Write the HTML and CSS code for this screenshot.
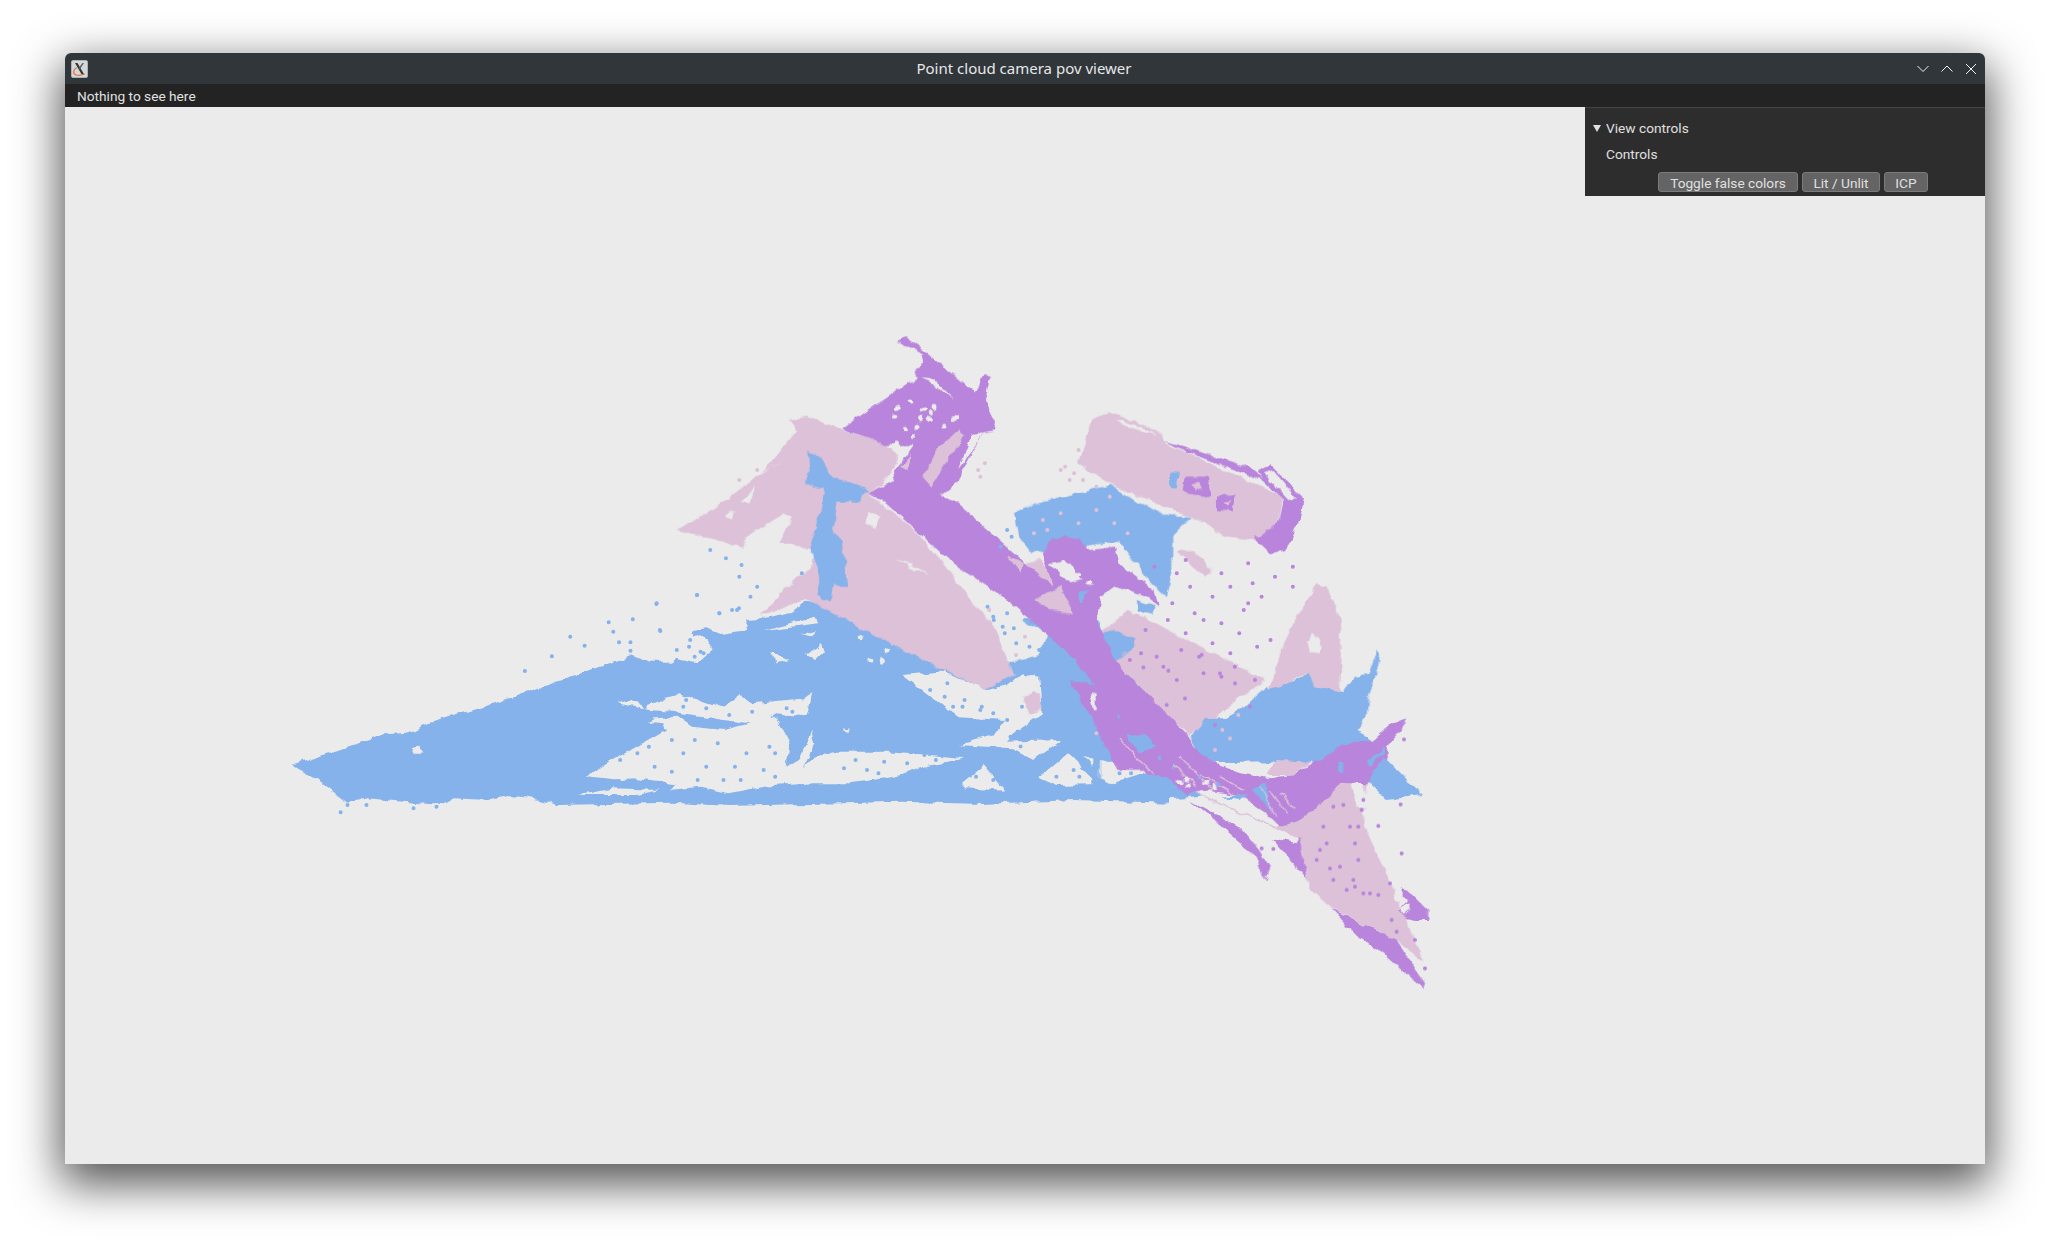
FILE: index.html
```html
<!DOCTYPE html>
<html lang="en">
<head>
  <meta charset="UTF-8" />
  <title>Point cloud camera pov viewer</title>
  <link rel="stylesheet" href="styles.css">
</head>
<body>
  <div class="window">
    <div class="titlebar">
      <svg class="app-icon" viewBox="0 0 17 18">
        <rect x="0.5" y="0.5" width="16" height="17" rx="1.5" fill="#d5d8da" stroke="#aeb2b5"/>
        <path d="M4 3 L6.5 3 L13.5 15 L11 15 Z" fill="#34373a"/>
        <path d="M13 3 L11.5 3 L7.8 8 L8.6 9.6 Z" fill="#55585b"/>
        <path d="M6.5 7.5 C2 9 1.5 14 5 15 C8 15.8 11 15 13.5 14" fill="none" stroke="#d9793a" stroke-width="1.2"/>
      </svg>
      <div class="title">Point cloud camera pov viewer</div>
      <div class="win-buttons">
        <svg viewBox="0 0 12 12"><path d="M0.5 3 L6 8.5 L11.5 3"/></svg>
        <svg viewBox="0 0 12 12"><path d="M0.5 8.5 L6 3 L11.5 8.5"/></svg>
        <svg viewBox="0 0 12 12"><path d="M1 1 L11 11 M11 1 L1 11"/></svg>
      </div>
    </div>
    <div class="menubar">Nothing to see here</div>
    <div class="canvas">
      <svg class="cloud" viewBox="65 107 1920 1057">
        <defs>
          <filter id="rough" x="0" y="0" width="100%" height="100%" filterUnits="userSpaceOnUse" color-interpolation-filters="sRGB">
            <feTurbulence type="fractalNoise" baseFrequency="0.09" numOctaves="2" seed="4"/>
            <feDisplacementMap in="SourceGraphic" scale="7" xChannelSelector="R" yChannelSelector="G"/>
          </filter>
        </defs>
        <g class="rough">
        <!-- blue layer, left part -->
        <g transform="translate(270 580) scale(.574 .3333)">
          <path class="blue" d="M38 553 L120 510 200 463 240 458 280 428 400 365 500 305 632 225 662 245 700 245 740 205 738 150 760 145 785 162 830 150 830 120 870 115 905 100 935 65 1100 120 1568 120 1568 668 1400 660 1240 672 1100 665 800 678 700 668 500 675 483 665 440 650 405 648 380 660 320 655 300 675 250 668 215 662 170 655 135 668 90 610 Z"/>
          <path class="hole" d="M548 588 L690 450 685 430 660 425 670 415 710 410 735 440 790 450 860 420 880 410 905 490 900 560 920 540 945 450 950 490 930 560 950 530 985 515 1090 515 1210 535 1140 560 1090 590 1010 610 950 610 860 620 800 640 750 620 695 630 705 610 640 595 600 598 Z"/>
          <path class="hole" d="M540 645 L600 625 680 630 640 645 Z"/>
          <path class="hole" d="M605 370 L630 360 655 385 660 375 715 340 760 370 790 385 820 345 840 370 930 355 945 340 935 410 880 400 860 435 790 420 760 410 700 395 660 390 Z"/>
          <path class="hole" d="M1100 285 L1170 275 1250 330 1285 315 1310 280 1340 290 1345 400 1310 440 1280 485 1380 480 1330 540 1290 505 1200 495 1260 465 1280 420 1200 412 1150 350 Z"/>
          <path class="hole" d="M1210 605 L1245 555 1280 632 1210 625 Z M1340 595 L1390 520 1445 615 1370 618 Z M1420 535 L1540 570 1460 612 Z"/>
          <path class="hole" d="M705 235 L715 190 745 165 775 205 745 250 Z M935 225 L960 190 965 215 950 240 Z M925 165 L955 155 945 175 Z M860 150 L950 110 955 130 Z M248 505 L258 500 266 518 252 518 Z M1425 330 L1465 335 1460 395 1440 400 Z M875 215 L905 240 880 250 Z"/>
          <path class="dots-hole" d="M1030 170h.1M1075 210h.1M1045 240h.1M1065 240h.1M1005 445h.1"/>
        </g>

        <!-- pink sheets -->
        <g transform="translate(650 320) scale(.4464 .3333)">
          <path class="hole" d="M1000 860 L1160 640 1240 600 1500 700 1400 1090 1240 1210 1030 1030 Z"/>
          <path class="hole" d="M730 830 L890 940 870 1010 790 1030 Z"/>
          <path class="hole" d="M1040 680 L1120 760 1160 840 1090 850 1060 780 Z"/>
          <path class="pink" d="M60 630 L150 560 210 500 270 430 330 330 310 298 350 290 530 375 555 400 555 430 520 490 490 520 600 640 680 770 720 840 770 920 815 1065 750 1110 655 1050 350 840 245 890 330 770 360 745 370 690 290 665 320 590 300 580 225 640 205 685 150 660 Z"/>
          <path class="hole" d="M205 545 L235 500 225 550 Z M170 590 L190 570 185 600 Z M225 470 L300 425 240 465 Z"/>
          <path class="pink" d="M990 300 L1030 275 1150 340 1155 370 1420 530 1400 620 1360 660 1290 650 1215 590 1170 570 1100 530 1040 500 960 430 Z"/>
          <path class="hole" d="M1040 300 L1060 300 1140 345 1100 335 Z"/>
          <path class="blue" d="M815 580 L860 550 1030 495 1090 545 1160 585 1215 590 1170 650 1170 760 1155 830 1110 770 1050 665 960 680 855 700 825 650 Z"/>
          <path class="pink" d="M1070 870 L1380 1080 1320 1130 1250 1210 1210 1245 1130 1150 1040 1020 1000 950 Z"/>
          <path class="pink" d="M1495 790 L1520 810 1545 900 1550 1000 1545 1130 1500 1110 1470 1060 1440 1080 1430 1110 1385 1110 1420 970 1450 890 Z"/>
          <path class="hole" d="M1485 935 L1502 960 1498 1000 1478 995 1472 965 Z"/>
          <path class="pink" d="M1180 695 L1215 690 1260 750 1245 770 Z M835 1130 L870 1120 880 1170 850 1180 Z M800 740 L870 720 930 790 940 900 880 870 850 880 Z"/>
          <path class="blue" d="M352 395 L385 415 405 470 445 485 490 510 470 545 420 545 410 640 430 670 445 805 410 790 405 840 385 840 375 825 380 760 365 720 360 660 385 570 390 505 350 495 358 450 Z"/>
          <path class="blue" d="M1000 950 L1040 930 1090 960 1080 990 1040 1020 1005 990 Z M1090 840 L1130 860 1125 885 1095 875 Z"/>
          <path class="hole" d="M550 715 L585 735 625 770 590 750 Z M490 575 L515 590 505 620 482 610 Z M880 720 L930 710 975 780 940 800 Z M1040 820 L1075 840 1050 880 Z"/>
        </g>

        <g transform="translate(1100 650) scale(.3333)">
          <path class="blue" d="M275 260 L320 205 380 200 440 165 500 110 510 120 575 95 625 70 650 110 690 120 725 130 730 120 765 80 805 75 830 0 840 15 830 70 805 130 800 200 770 240 820 270 855 320 965 435 860 450 810 400 640 335 300 340 Z"/>
          <path class="blue" d="M-20 240 L200 300 300 440 260 445 100 452 -20 450 Z"/>
          <path class="hole" d="M0 330 L45 340 160 360 30 400 0 385 Z"/>
          <path class="pink" d="M270 420 L330 450 520 530 600 570 625 715 690 770 890 870 970 935 870 700 790 520 800 400 750 370 700 400 640 480 530 530 Z M500 375 L530 330 640 335 570 375 Z"/>
          <path class="hole" d="M745 375 L790 395 800 470 770 470 Z"/>
        </g>

        <!-- purple sheets -->
        <g transform="translate(650 320) scale(.4464 .3333)">
          <path class="purple" d="M553 65 L575 55 620 100 680 165 730 220 745 170 762 168 750 240 775 310 770 335 745 340 720 400 690 480 650 525 680 540 800 680 900 800 880 700 900 660 930 645 960 660 990 690 1040 680 1050 730 1130 810 1140 860 1110 830 1040 800 1010 830 1000 900 1040 1020 1130 1150 1210 1250 1240 1350 1100 1350 1000 1100 930 990 800 840 670 720 520 540 490 520 540 480 560 430 590 375 525 375 430 325 600 170 590 155 612 130 608 100 Z"/>
          <path class="hole" d="M608 172 L630 175 682 240 Z M720 345 L745 340 705 425 690 450 Z"/>
          <path class="pink" d="M610 470 L650 380 690 330 705 345 660 430 630 500 Z M560 440 L585 400 575 450 Z"/>
          <path class="dots-hole" d="M548 288h.1M556 262h.1M582 246h.1M612 268h.1M636 262h.1M628 298h.1M598 316h.1M572 328h.1M592 350h.1M552 372h.1M658 318h.1M682 296h.1M630 280h.1M606 296h.1"/>
          <path class="pink" d="M800 710 L840 730 830 760 Z M860 840 L920 800 950 880 900 870 Z"/>
          <path class="purple" d="M1150 360 L1340 440 1375 480 1360 455 1390 435 1465 535 1455 600 1425 690 1390 700 1350 650 1290 650 1360 650 1400 620 1420 540 1370 480 1200 395 Z"/>
          <path class="hole" d="M1375 460 L1395 450 1450 535 1430 540 Z"/>
          <path class="purple" d="M1200 470 L1250 470 1255 530 1195 520 Z M1270 530 L1310 525 1305 575 1270 570 Z"/>
          <path class="pink" d="M1215 490 L1235 485 1235 505 1220 510 Z M1285 545 L1300 540 1295 560 Z"/>
          <path class="blue" d="M1165 460 L1185 450 1180 505 1165 505 Z"/>
          <path class="hole" d="M895 730 L930 720 970 780 940 790 Z M1035 825 L1060 835 1045 860 Z"/>
          <path class="blue" d="M960 820 L985 810 965 850 Z"/>
          <path class="purple" d="M940 1080 L1010 1100 1060 1230 1100 1350 1050 1350 Z"/>
          <path class="hole" d="M985 1115 L1030 1120 1025 1170 995 1170 Z"/>
          <path class="dots-hole" d="M1070 850h.1M1055 880h.1M1010 900h.1M1090 880h.1M960 760h.1M985 790h.1"/>
        </g>

        <g transform="translate(1100 650) scale(.3333)">
          <path class="purple" d="M-10 0 L60 60 130 120 230 220 280 290 340 340 420 370 510 385 570 375 640 340 720 290 780 270 820 270 880 220 918 205 910 235 860 290 865 330 850 320 800 400 720 395 680 450 640 480 600 510 540 530 500 490 470 470 430 440 380 430 300 420 260 440 200 380 140 370 60 270 40 230 -10 230 -10 160 Z"/>
          <path class="purple" d="M270 450 L340 490 420 530 480 600 510 650 495 690 470 620 420 580 380 545 330 500 Z"/>
          <path class="purple" d="M515 565 L590 580 600 560 605 600 620 685 Z"/>
          <path class="purple" d="M695 775 L890 870 910 900 975 1000 970 1015 850 910 740 835 720 800 Z"/>
          <path class="purple" d="M905 715 L925 720 985 780 985 810 950 810 915 805 895 780 925 750 905 740 Z"/>
          <path class="hole" d="M900 775 L925 760 930 780 910 795 Z M345 480 L380 495 420 525 390 520 Z M905 890 L945 930 925 925 Z"/>
          <path class="blue" d="M800 340 L850 290 855 300 820 345 Z M708 340 L730 335 730 365 715 365 Z M80 260 L130 250 170 290 120 310 Z M450 420 L500 400 510 480 470 440 Z M360 440 L440 435 420 450 Z"/>
          <path class="lattice" d="M220 340 L290 410 M240 320 L340 420 M300 370 L400 430 M360 380 L430 420 M480 410 L530 500 M510 420 L560 490 M540 430 L590 480 M60 270 L160 370"/>
          <path class="dots-hole" d="M240 395h.1M258 388h.1M262 405h.1M330 425h.1M345 410h.1M320 400h.1M370 490h.1M395 515h.1"/>
          <path class="dots-blue" d="M220 350h.1M300 385h.1M355 400h.1M180 320h.1M60 200h.1"/>
        </g>
        </g>

        <!-- stray points -->
        <g transform="translate(270 580) scale(.574 .3333)">
          <path class="dots-blue" d="M744 45h.1M673 72h.1M632 118h.1M590 127h.1M598 155h.1M680 153h.1M523 170h.1M548 197h.1M608 187h.1M628 187h.1M628 212h.1M491 229h.1M444 273h.1M783 100h.1M805 90h.1M817 85h.1M123 697h.1M135 675h.1M168 675h.1M250 685h.1M290 680h.1M660 500h.1M700 480h.1M640 520h.1M720 520h.1M780 490h.1M830 520h.1M870 500h.1M760 560h.1M700 575h.1M810 560h.1M860 570h.1M790 600h.1M1020 540h.1M1070 545h.1M1040 570h.1M1000 565h.1M1110 550h.1M1160 540h.1M1290 470h.1M1310 380h.1M1240 380h.1M1180 310h.1M1210 360h.1M1260 400h.1M1230 590h.1M1400 570h.1M1370 590h.1M720 380h.1M760 385h.1M840 395h.1M900 385h.1M880 520h.1M1500 580h.1M1260 110h.1M1280 160h.1M1300 190h.1M1250 80h.1M1320 120h.1M1340 210h.1M730 200h.1M750 215h.1M1005 440h.1M960 300h.1M1062 330h.1M610 540h.1M670 560h.1M740 480h.1M745 600h.1M820 600h.1M880 590h.1M900 450h.1M1060 580h.1M1140 525h.1M1150 330h.1M1230 440h.1M1190 380h.1M725 360h.1M800 405h.1M910 395h.1M1260 600h.1M1410 590h.1M1480 580h.1"/>
        </g>
        <g transform="translate(650 320) scale(.4464 .3333)">
          <path class="dots-pink" d="M750 430h.1M735 450h.1M740 470h.1M930 440h.1M950 460h.1M970 480h.1M940 480h.1M1000 500h.1M270 440h.1M240 450h.1M200 480h.1M280 500h.1M860 1120h.1M1000 1240h.1M790 1000h.1M820 1005h.1M760 870h.1M840 950h.1M960 390h.1M920 450h.1"/>
          <path class="dots-blue" d="M170 715h.1M205 735h.1M200 770h.1M240 800h.1M225 830h.1M155 880h.1M105 825h.1M15 850h.1M22 930h.1M135 690h.1M195 870h.1M340 760h.1M800 630h.1M810 650h.1M785 680h.1M790 920h.1M815 925h.1M850 980h.1M660 1130h.1M700 1160h.1M740 1170h.1M800 1200h.1M830 1280h.1M520 1110h.1M440 1225h.1M770 900h.1M800 880h.1M840 900h.1M60 990h.1M90 960h.1M120 1000h.1M100 1010h.1"/>
          <path class="dots-pink-on-blue" d="M880 600h.1M920 580h.1M960 610h.1M1000 570h.1M860 640h.1M1040 610h.1M1070 640h.1M890 630h.1M1030 530h.1"/>
          <path class="dots-purple" d="M1180 760h.1M1210 800h.1M1260 830h.1M1300 800h.1M1350 790h.1M1400 770h.1M1440 740h.1M1170 850h.1M1220 880h.1M1280 910h.1M1330 870h.1M1370 830h.1M1390 960h.1M1360 980h.1M1300 1000h.1M1260 970h.1M1230 1010h.1M1200 940h.1M1160 900h.1M1150 1040h.1M1100 1000h.1M1180 1080h.1M1240 1060h.1M1280 1070h.1M1320 940h.1M1440 800h.1M1130 740h.1M1340 730h.1M1110 930h.1M1075 1020h.1M1200 720h.1M1280 760h.1M1340 850h.1M1240 900h.1M1190 990h.1M1310 1040h.1"/>
        </g>
        <g transform="translate(1100 650) scale(.3333)">
          <path class="dots-purple" d="M670 530h.1M700 470h.1M730 465h.1M680 580h.1M660 600h.1M720 650h.1M760 690h.1M775 630h.1M750 530h.1M775 530h.1M765 580h.1M700 690h.1M650 630h.1M690 655h.1M790 730h.1M810 730h.1M835 735h.1M870 700h.1M875 810h.1M890 845h.1M945 870h.1M975 955h.1M905 610h.1M835 528h.1M912 268h.1M902 463h.1M485 595h.1M520 597h.1M170 20h.1M205 62h.1M130 52h.1M305 15h.1M360 70h.1M405 100h.1M465 90h.1M255 145h.1M200 165h.1M450 170h.1M345 225h.1M740 720h.1M765 710h.1M785 480h.1M790 450h.1"/>
          <path class="dots-pink-on-blue" d="M345 300h.1M390 265h.1M367 240h.1M415 195h.1"/>
        </g>
      </svg>
      <div class="panel">
        <div class="panel-head"><span class="arrow"></span>View controls</div>
        <div class="panel-label">Controls</div>
        <div class="panel-buttons">
          <button class="btn btn-false">Toggle false colors</button>
          <button class="btn btn-lit">Lit / Unlit</button>
          <button class="btn btn-icp">ICP</button>
        </div>
      </div>
    </div>
  </div>
</body>
</html>
```

FILE: styles.css
```css
* {
  margin: 0;
  padding: 0;
  box-sizing: border-box;
}

html, body {
  width: 100%;
  height: 100%;
  background: #fff;
  overflow: hidden;
}

body {
  padding: 53px 65px 77px;
  font-family: Roboto, sans-serif;
}

.window {
  height: 1111px;
  display: flex;
  flex-direction: column;
  border-radius: 6px 6px 0 0;
  box-shadow: 0 16px 46px 4px rgba(0,0,0,0.68);
}

.titlebar {
  height: 31px;
  display: grid;
  grid-template-columns: 1fr auto 1fr;
  align-items: center;
  padding: 0 8px 0 6px;
  background: #31363b;
  border-radius: 6px 6px 0 0;
  color: #e6e8e9;
}

.app-icon {
  width: 17px;
  height: 18px;
}

.title {
  padding-bottom: 1px;
  font-family: "Noto Sans", sans-serif;
  font-size: 15px;
}

.win-buttons {
  display: flex;
  justify-content: flex-end;
  gap: 12px;
}

.win-buttons svg {
  width: 12px;
  height: 12px;
}

.win-buttons path {
  fill: none;
  stroke: #f0f1f1;
  stroke-width: 1;
}

.menubar {
  height: 23px;
  padding: 4px 0 0 12px;
  background: #232323;
  color: #e2e2e2;
  font-size: 13.7px;
}

.canvas {
  flex: 1;
  position: relative;
  background: #ebebeb;
}

.cloud {
  position: absolute;
  top: 0;
  left: 0;
  width: 100%;
  height: 100%;
}

.rough { filter: url(#rough); }

.blue { fill: #85b2ea; }
.pink { fill: #dcc1d8; }
.purple { fill: #b984db; }
.hole { fill: #ebebeb; }

.lattice {
  fill: none;
  stroke: #dcc1d8;
  stroke-width: 1.5;
  vector-effect: non-scaling-stroke;
}

.dots-blue, .dots-pink, .dots-purple, .dots-pink-on-blue, .dots-hole {
  fill: none;
  stroke-linecap: round;
  stroke-width: 4;
  vector-effect: non-scaling-stroke;
}

.dots-blue { stroke: #85b2ea; }
.dots-pink, .dots-pink-on-blue { stroke: #dcc1d8; }
.dots-purple { stroke: #b984db; }
.dots-hole { stroke: #ebebeb; stroke-width: 5; }

.panel {
  position: absolute;
  top: 0;
  right: 0;
  width: 400px;
  height: 89px;
  padding: 11px 0 0 8px;
  background: #2d2d2d;
  border-top: 1px solid #454545;
  color: #e0e0e0;
  font-size: 13.7px;
}

.panel-head {
  display: flex;
  align-items: center;
  gap: 5px;
  height: 18px;
}

.arrow {
  width: 0;
  height: 0;
  border-left: 4px solid transparent;
  border-right: 4px solid transparent;
  border-top: 7px solid #e0e0e0;
}

.panel-label {
  height: 18px;
  margin-top: 9px;
  padding-left: 13px;
}

.panel-buttons {
  display: flex;
  gap: 4px;
  margin-top: 8px;
  padding-left: 65px;
}

.btn {
  height: 20px;
  padding-top: 1px;
  background: #646464;
  border: 1px solid #7b7b7b;
  border-radius: 3px;
  color: #e0e0e0;
  font-family: Roboto, sans-serif;
  font-size: 13.7px;
}

.btn-false { width: 140px; }
.btn-lit { width: 78px; }
.btn-icp { width: 44px; }
```
